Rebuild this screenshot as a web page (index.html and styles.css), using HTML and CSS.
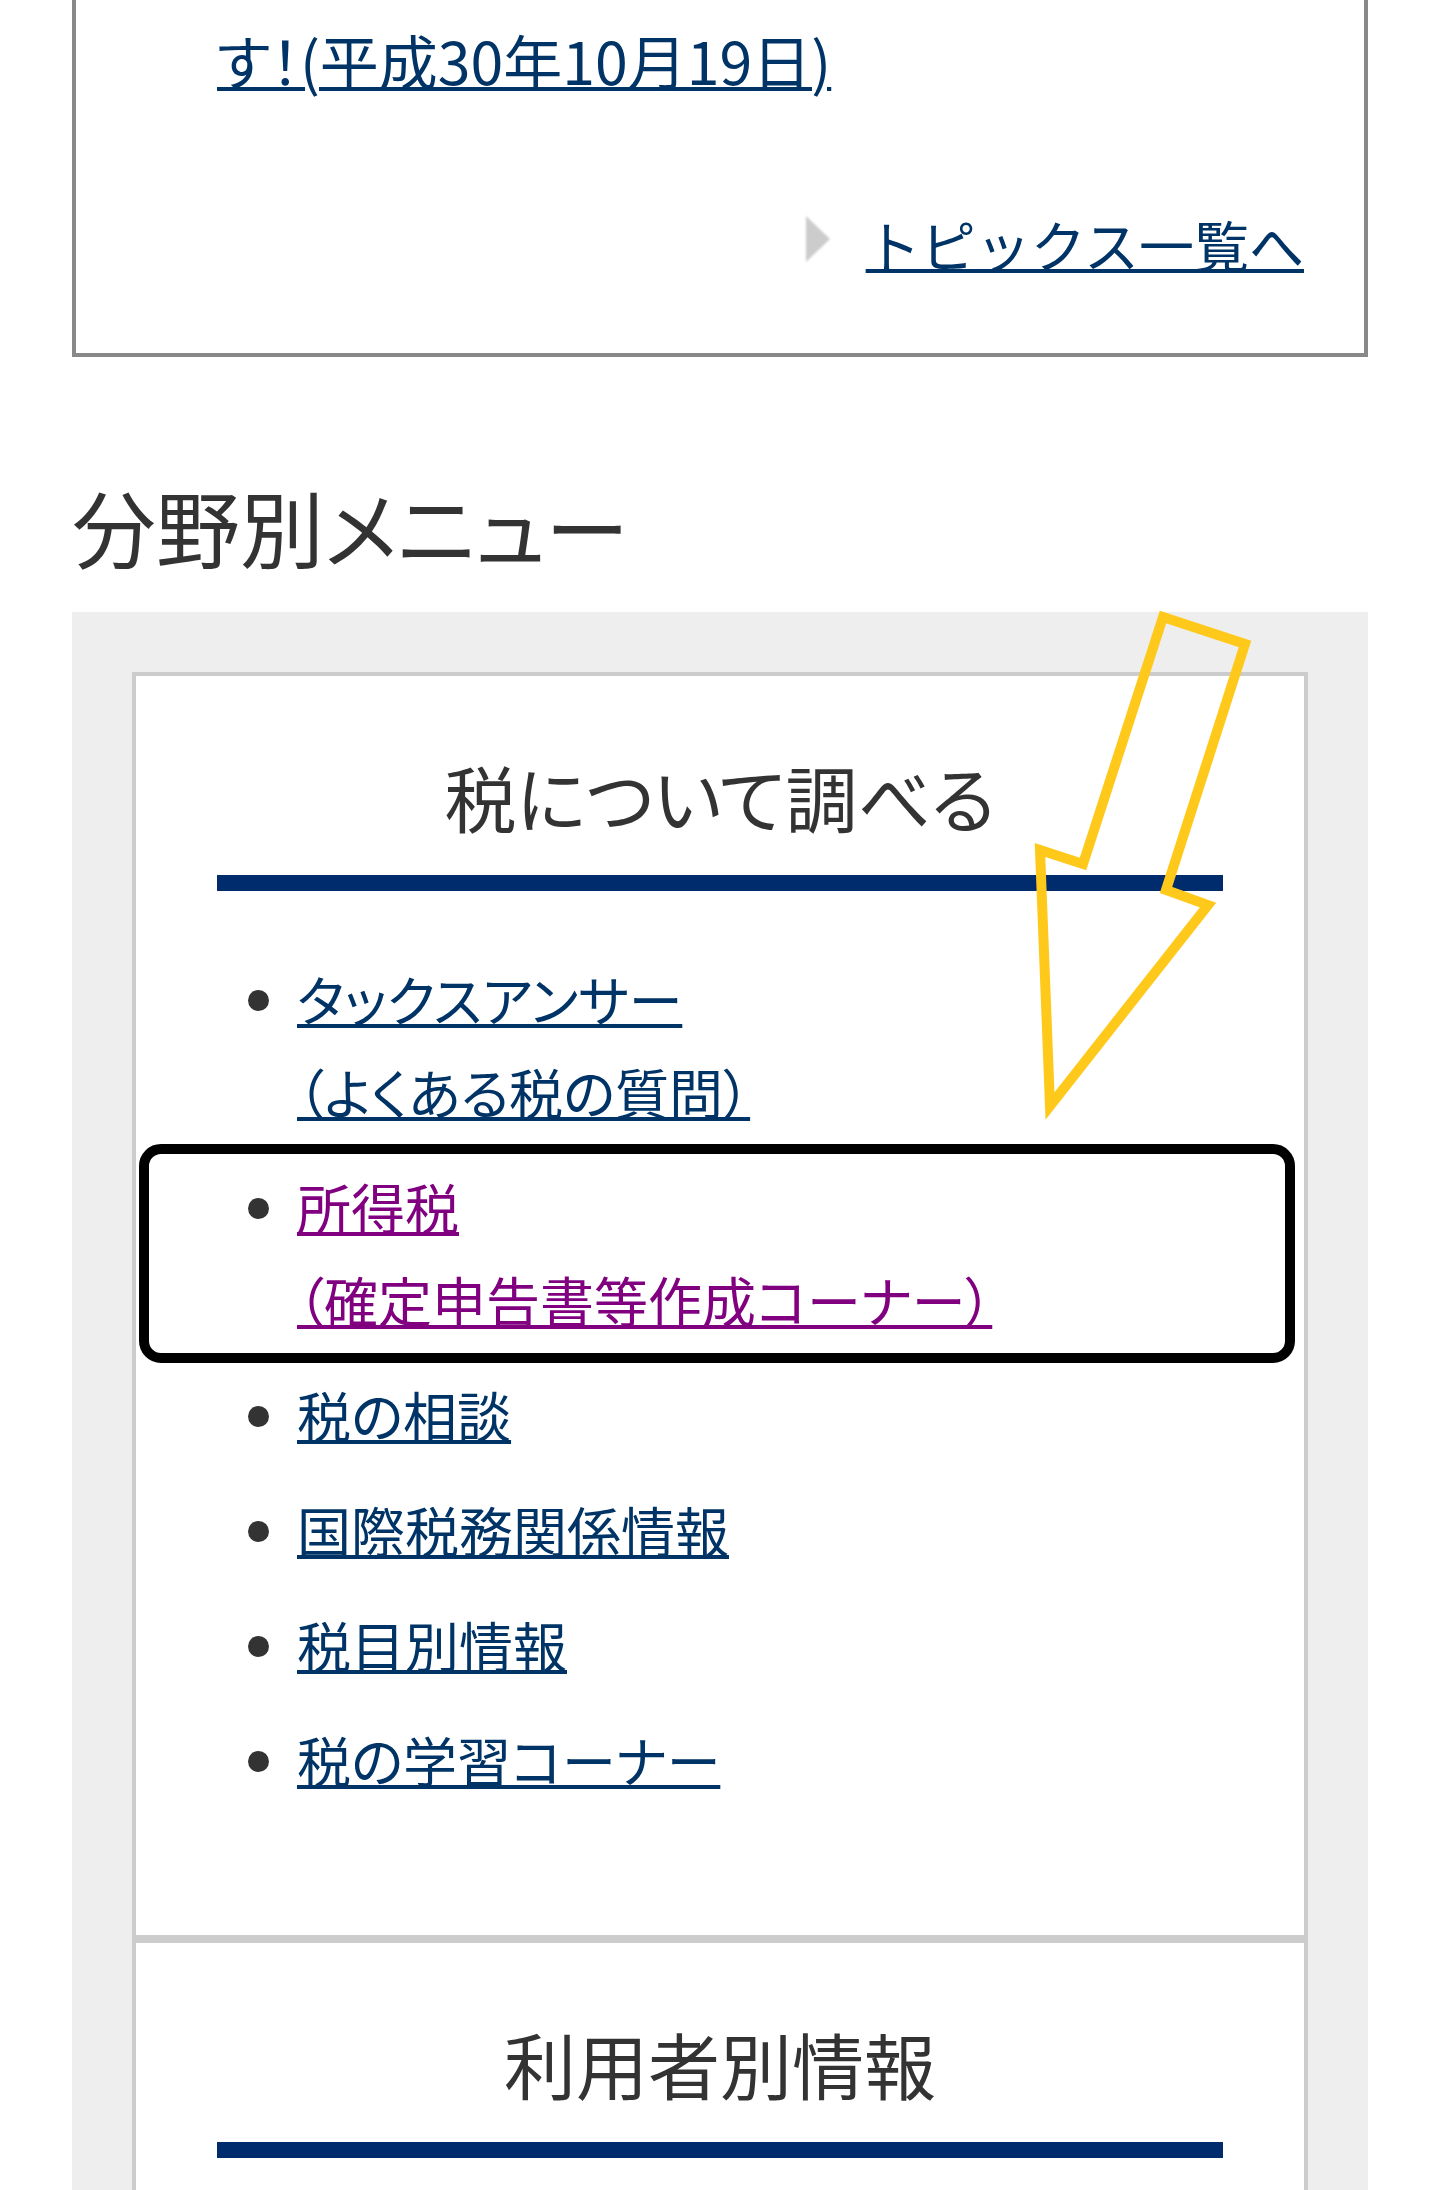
FILE: index.html
```html
<!doctype html>
<html lang="ja">
    <head>
        <meta charset="utf-8">
        <link rel="stylesheet" href="styles.css">
    </head>
    <body>
        <div class="topics">
            <ul class="topic-list">
                <li><a href="#">す！(平成30年10月19日)</a></li>
            </ul>
            <p class="topic-more"><span class="more-mark"></span><a href="#">トピックス一覧へ</a></p>
        </div>

        <h2 class="section-title">分野別メニュー</h2>
        <div class="menu-panel">
            <section class="menu-card">
                <h3 class="menu-card-title">税について調べる</h3>
                <ul class="menu-links">
                    <li><a href="#">タックスアンサー<br>（よくある税の質問）</a></li>
                    <li class="marked"><a class="visited" href="#">所得税<br>（確定申告書等作成コーナー）</a></li>
                    <li><a href="#">税の相談</a></li>
                    <li><a href="#">国際税務関係情報</a></li>
                    <li><a href="#">税目別情報</a></li>
                    <li><a href="#">税の学習コーナー</a></li>
                </ul>
            </section>
            <section class="menu-card">
                <h3 class="menu-card-title">利用者別情報</h3>
                <ul class="menu-links"></ul>
            </section>
        </div>

        <svg class="callout-arrow" width="250" height="540" viewBox="0 0 250 540">
            <polygon points="143,27 225,54 146,300 188,315 30,516 20,260 63,274"/>
        </svg>
    </body>
</html>
```

FILE: styles.css
```css
body {
    color: #333;
    font-family: "Noto Sans CJK JP", "Noto Sans", sans-serif;
    font-feature-settings: "palt";
    font-size: 56px;
    line-height: 93px;
    margin: 0;
}
a {
    color: #003366;
    text-decoration: underline;
    text-decoration-thickness: 4px;
}
a.visited {
    color: #800080;
}

/* topics box (cut at the top of the screen) */
.topics {
    border: 4px solid #888;
    border-top: 0;
    font-size: 55px;
    margin: 0 72px;
    padding: 13px 60px 63px 141px;
}
.topic-list {
    font-size: 59px;
    list-style: none;
    margin: 0;
    padding: 0;
}
.topic-more {
    font-feature-settings: normal;
    margin: 91px 0 0;
    text-align: right;
}
.more-mark {
    border-bottom: 23px solid transparent;
    border-left: 24px solid #ccc;
    border-top: 23px solid transparent;
    display: inline-block;
    filter: blur(0.8px);
    margin-right: 36px;
    vertical-align: 5px;
}

/* menu */
.section-title {
    font-size: 84px;
    font-weight: normal;
    line-height: 101px;
    margin: 118px 72px 36px;
}
.menu-panel {
    background: #eee;
    margin: 0 72px;
    padding: 60px 60px 0;
}
.menu-card {
    background: #fff;
    border: 4px solid #ccc;
}
.menu-card-title {
    border-bottom: 16px solid #002b6c;
    font-size: 72px;
    font-weight: normal;
    line-height: 84px;
    margin: 0 81px;
    padding: 78px 0 37px;
    text-align: center;
}
.menu-links {
    font-size: 54px;
    list-style: disc;
    margin: 61px 0 0;
    padding: 0 0 129px 161px;
}
.menu-links li + li {
    margin-top: 22px;
}
.menu-links li.marked {
    position: relative;
}
.menu-links li.marked::after {
    border: 10px solid #000;
    border-radius: 22px;
    bottom: -17px;
    content: "";
    left: -158px;
    position: absolute;
    right: 9px;
    top: -16px;
}

/* yellow callout arrow drawn over the page */
.callout-arrow {
    left: 1020px;
    overflow: visible;
    position: absolute;
    top: 590px;
}
.callout-arrow polygon {
    fill: none;
    stroke: #fec91b;
    stroke-linejoin: miter;
    stroke-width: 10;
}
```
